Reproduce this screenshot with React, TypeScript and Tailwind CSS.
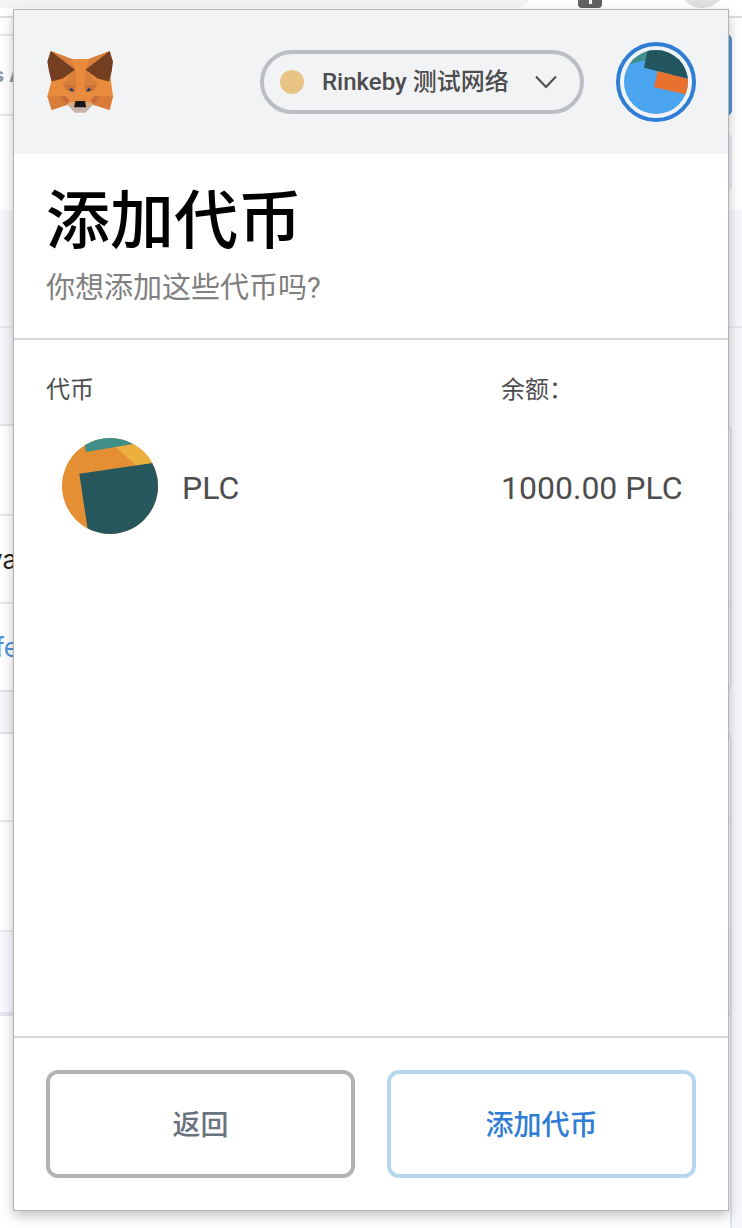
import type { ReactNode } from "react";

function FoxLogo() {
  return (
    <svg viewBox="50 46 200 188" className="h-[63px] w-[67px]" role="img" aria-label="MetaMask">
      <polygon fill="#e88b3d" points="64,46 127,70 178,70 240,46 244,137 250,180 240,222 186,205 168,218 135,218 120,205 67,222 54,180 66,137" />
      <polygon fill="#d97f3d" points="64,46 127,70 137,102" />
      <polygon fill="#d97f3d" points="240,46 178,70 168,102" />
      <polygon fill="#d97f3d" points="137,102 100,145 140,150" />
      <polygon fill="#d97f3d" points="168,102 204,145 164,150" />
      <polygon fill="#733f20" points="64,46 54,77 59,107 67,137 100,128 137,102" />
      <polygon fill="#733f20" points="240,46 250,77 246,107 238,137 204,128 168,102" />
      <polygon fill="#d97b39" points="54,180 110,180 116,205 67,222" />
      <polygon fill="#d97b39" points="250,180 194,180 188,205 240,222" />
      <polygon fill="#c66b38" points="110,180 92,182 114,205 122,192" />
      <polygon fill="#c66b38" points="194,180 212,182 190,205 182,192" />
      <polygon fill="#cc7039" points="100,145 140,150 135,168 112,164" />
      <polygon fill="#cc7039" points="204,145 164,150 169,168 192,164" />
      <polygon fill="#e58a40" points="110,180 135,168 140,196 122,198" />
      <polygon fill="#e58a40" points="194,180 169,168 164,196 182,198" />
      <polygon fill="#263d5c" points="119,161 127,156 134,167 124,166" />
      <polygon fill="#263d5c" points="185,161 177,156 170,167 180,166" />
      <polygon fill="#c8b2a5" points="112,204 135,211 169,211 192,204 168,230 136,230" />
      <polygon fill="#e0a878" points="112,204 122,198 136,198 135,212" />
      <polygon fill="#e0a878" points="192,204 182,198 168,198 169,212" />
      <polygon fill="#171717" points="138,195 166,195 170,214 134,214" />
    </svg>
  );
}

function AccountIdenticon() {
  return (
    <svg viewBox="0 0 192 192" className="size-full rounded-full bg-[#4aa4ee]" aria-hidden="true">
      <polygon fill="#3f8f88" points="10,44 66,30 76,-5 0,-5" />
      <polygon fill="#23555e" points="73,-10 60,53 200,89 200,-10" />
      <polygon fill="#ea712d" points="101,63 90,112 200,136 200,89" />
    </svg>
  );
}

function TokenIdenticon() {
  return (
    <svg viewBox="0 0 288 288" className="size-24 rounded-full bg-[#e58f34]" aria-hidden="true">
      <polygon fill="#ebb03e" points="158,25 224,84 300,74 300,0 200,18" />
      <polygon fill="#3f8f88" points="66,10 72,42 214,18 206,-10 66,-10" />
      <polygon fill="#25575d" points="52,107 300,71 300,300 81,300" />
    </svg>
  );
}

function PageRow({ className, children }: { className: string; children?: ReactNode }) {
  return <div className={`flex items-center whitespace-nowrap border-[#e6e7f0] ${className}`}>{children}</div>;
}

function UnderlyingPage() {
  return (
    <div className="absolute inset-0 flex flex-col overflow-hidden bg-[#f6f7fa] font-[Inter,sans-serif]" aria-hidden="true">
      <div className="h-[18px] shrink-0 border-b-2 border-[#dcdce4] bg-white">
        <div className="flex h-2 items-end">
          <div className="h-10 flex-1 rounded-r-full bg-[#f1f3f4]" />
          <div className="ml-[44px] flex h-6 w-6 items-end justify-center rounded-sm bg-[#636363] pb-1">
            <div className="h-4 w-[3px] bg-white" />
          </div>
          <div className="mr-4 ml-[76px] size-12 rounded-full bg-[#e0e0e0]" />
        </div>
      </div>
      <div className="flex h-[192px] shrink-0 flex-col bg-white pr-[10px] pt-4">
        <div className="flex h-[82px]">
          <PageRow className="flex-1 border-y-2 text-[20px] font-bold text-[#8c98a6]">
            <span className="-ml-[7px]">s A</span>
          </PageRow>
          <div className="w-20 rounded-md bg-[#4a94d6]" />
        </div>
        <div className="mt-4 h-[60px] w-20 self-end rounded-md bg-[#e6edf5]" />
      </div>
      <PageRow className="h-[118px] shrink-0 border-b-2" />
      <div className="h-24 shrink-0" />
      <div className="mr-[10px] shrink-0 rounded-r-lg border-2 border-l-0 border-[#e1e3ea] bg-white">
        <PageRow className="h-[90px] border-b-2" />
        <PageRow className="h-[88px] border-b-2 text-[26px] text-[#222222]">
          <span className="-ml-3">va</span>
        </PageRow>
        <PageRow className="h-[86px] text-[26px] text-[#4a94d6]">
          <span className="-ml-[5px]">fe</span>
        </PageRow>
      </div>
      <div className="h-10 shrink-0" />
      <div className="mr-[10px] flex-1 rounded-tr-lg border-t-2 border-r-2 border-[#e1e3ea] bg-white">
        <PageRow className="h-[88px] border-b-2" />
        <PageRow className="h-[110px] border-b-2" />
        <PageRow className="h-[84px] border-b-4 bg-[#f8faff]" />
      </div>
    </div>
  );
}

function NetworkSelect() {
  return (
    <div className="flex h-16 items-center rounded-full border-4 border-[#bbbec5] pr-[23px] pl-4">
      <span className="mr-[18px] size-6 rounded-full bg-[#e8c584]" />
      <select aria-label="网络" className="appearance-none bg-transparent text-[24px] font-medium text-[#4d4d4d]">
        <option>Rinkeby 测试网络</option>
      </select>
      <svg viewBox="0 0 22 14" className="pointer-events-none ml-[26px] h-[14px] w-[22px]" fill="none" stroke="#4d4d4d" strokeWidth="2" aria-hidden="true">
        <path d="M1 1.5 11 12 21 1.5" />
      </svg>
    </div>
  );
}

export default function App() {
  return (
    <div className="relative flex min-h-screen px-[14px] pt-[10px] pb-[18px]">
      <UnderlyingPage />
      <div className="relative flex flex-1 flex-col bg-white font-[Roboto,'Noto_Sans_CJK_SC',sans-serif] shadow-[0_0_0_1px_#b4b4b4,0_5px_12px_rgba(0,0,0,0.28)]">
        <header className="flex items-center bg-[#f1f3f5] px-8 py-8">
          <FoxLogo />
          <div className="ml-auto flex items-center gap-8">
            <NetworkSelect />
            <button type="button" aria-label="账户" className="size-20 rounded-full border-4 border-[#2f7dd5] p-1">
              <AccountIdenticon />
            </button>
          </div>
        </header>

        <section className="border-b-2 border-[#d2d8dd] px-8 pt-7 pb-[30px]">
          <h1 className="text-[64px] leading-[80px] font-medium text-black">添加代币</h1>
          <p className="mt-[6px] text-[29px] leading-[40px] text-[#808080]">你想添加这些代币吗?</p>
        </section>

        <main className="flex-1 px-8 pt-8 text-[#4d4d4d]">
          <table className="w-full table-fixed text-left">
            <thead>
              <tr className="text-[24px] leading-[36px]">
                <th className="w-[70%] p-0 font-normal">代币</th>
                <th className="p-0 font-normal">余额：</th>
              </tr>
            </thead>
            <tbody className="text-[32px] leading-[40px]">
              <tr>
                <td className="pt-[30px] pl-4">
                  <div className="flex items-center gap-6">
                    <TokenIdenticon />
                    <span className="pt-1">PLC</span>
                  </div>
                </td>
                <td className="pt-[34px] whitespace-nowrap">1000.00 PLC</td>
              </tr>
            </tbody>
          </table>
        </main>

        <footer className="grid grid-cols-2 gap-8 border-t-2 border-[#d2d8dd] p-8 text-[28px] font-medium">
          <button type="button" className="h-[108px] rounded-xl border-4 border-[#b2b2b2] pt-1 text-[#6a737d]">
            返回
          </button>
          <button type="button" className="h-[108px] rounded-xl border-4 border-[#b7d7ef] pt-1 text-[#2f7dd5]">
            添加代币
          </button>
        </footer>
      </div>
    </div>
  );
}
